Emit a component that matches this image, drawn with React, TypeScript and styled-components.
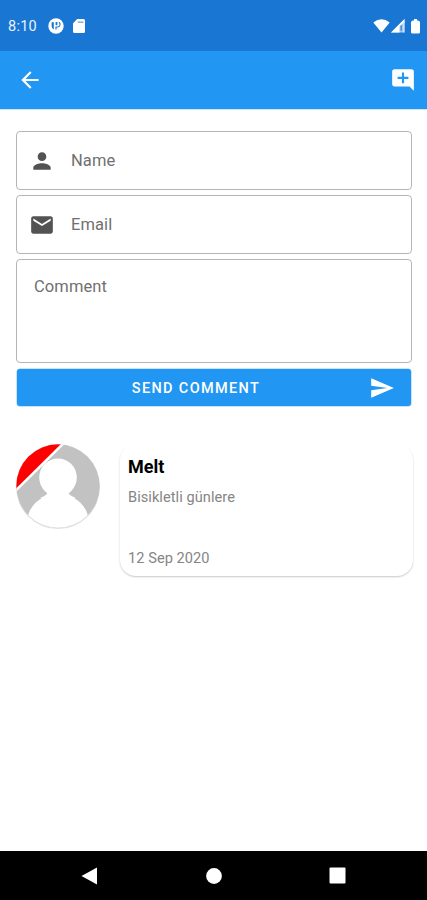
import React from 'react';
import styled, { createGlobalStyle } from 'styled-components';

const GlobalStyle = createGlobalStyle`
  *, *::before, *::after { box-sizing: border-box; }
  body { margin: 0; background: #fff; font-family: Roboto, "Liberation Sans", sans-serif; }
`;

const Screen = styled.div`
  width: 427px;
  height: 900px;
  display: flex;
  flex-direction: column;
  background: #fff;
  overflow: hidden;
`;

const StatusBar = styled.header`
  height: 51px;
  flex: none;
  display: flex;
  align-items: center;
  padding: 1px 7px 0 8px;
  background: #1976d2;
  color: #e9f2fb;
`;

const Clock = styled.span`
  width: 40px;
  padding-top: 2px;
  font-size: 14.5px;
  line-height: 20px;
  letter-spacing: 0.25px;
`;

const StatusGroup = styled.div<{ $end?: boolean }>`
  display: flex;
  align-items: center;
  margin-left: ${(p) => (p.$end ? 'auto' : '0')};
`;

const Icon = styled.svg<{ $gap?: number }>`
  display: block;
  flex: none;
  fill: currentColor;
  margin-left: ${(p) => p.$gap ?? 0}px;
`;

const AppBar = styled.nav`
  height: 58px;
  flex: none;
  display: flex;
  align-items: center;
  justify-content: space-between;
  padding: 0 11px 0 17px;
  background: #2196f3;
  color: #fff;
  box-shadow: 0 1px 0 #cbe6fb;
`;

const IconButton = styled.button`
  padding: 0;
  border: 0;
  background: none;
  color: inherit;
`;

const Content = styled.main`
  flex: 1;
  padding: 22px 15px 0 16px;
`;

const Form = styled.form`
  display: flex;
  flex-direction: column;
  gap: 5px;
`;

const Field = styled.label<{ $height: number; $multiline?: boolean }>`
  height: ${(p) => p.$height}px;
  display: flex;
  align-items: ${(p) => (p.$multiline ? 'flex-start' : 'center')};
  gap: 16px;
  padding: ${(p) => (p.$multiline ? '17px 17px 0' : '0 12px')};
  border: 1.5px solid #b5b5b5;
  border-radius: 4px;
  color: #535353;
`;

const Placeholder = styled.span`
  font-size: 16.5px;
  line-height: 20px;
  letter-spacing: 0.1px;
  color: #707070;
`;

const SendButton = styled.button`
  height: 37px;
  display: flex;
  align-items: center;
  margin: 1px 1px 1px;
  padding: 0 16px 0 0;
  border: 0;
  border-radius: 3px;
  background: #2196f3;
  box-shadow: 0 0 0 0.5px #90caf9;
  color: #fff;
  font-family: inherit;
`;

const SendLabel = styled.span`
  flex: 1;
  padding: 2px 0 0 6px;
  text-align: center;
  font-size: 14.5px;
  font-weight: 500;
  letter-spacing: 1.35px;
`;

const Comment = styled.article`
  display: flex;
  gap: 20px;
  margin-top: 37px;
`;

const Avatar = styled.svg`
  width: 84px;
  height: 86px;
  display: block;
  flex: none;
`;

const Card = styled.section`
  flex: 1;
  height: 132px;
  display: flex;
  flex-direction: column;
  margin-right: -1px;
  padding: 12px 8px 8px 8px;
  border-radius: 16px;
  box-shadow: 0 1px 2px rgba(0, 0, 0, 0.22);
  clip-path: inset(4px -4px -5px -4px);
`;

const Author = styled.h2`
  margin: 0;
  font-size: 18px;
  line-height: 22px;
  font-weight: 700;
  color: #000;
`;

const Small = styled.p<{ $last?: boolean }>`
  margin: ${(p) => (p.$last ? 'auto 0 0' : '9px 0 0')};
  font-size: 14.6px;
  line-height: 20px;
  letter-spacing: 0.05px;
  color: #858585;
`;

const NavBar = styled.footer`
  height: 49px;
  flex: none;
  display: flex;
  align-items: center;
  justify-content: space-between;
  padding: 0 81px 0 81px;
  background: #000;
  color: #fff;
`;

const paths = {
  back: 'M20 11H7.83l5.59-5.59L12 4l-8 8 8 8 1.41-1.41L7.83 13H20v-2z',
  addComment:
    'M22 4c0-1.1-.9-2-2-2H4c-1.1 0-2 .9-2 2v12c0 1.1.9 2 2 2h14l4 4V4zm-5 7h-4v4h-2v-4H7V9h4V5h2v4h4v2z',
  person:
    'M12 12c2.21 0 4-1.79 4-4s-1.79-4-4-4-4 1.79-4 4 1.79 4 4 4zm0 2c-2.67 0-8 1.34-8 4v2h16v-2c0-2.66-5.33-4-8-4z',
  mail: 'M20 4H4c-1.1 0-2 .9-2 2v12c0 1.1.9 2 2 2h16c1.1 0 2-.9 2-2V6c0-1.1-.9-2-2-2zm0 4l-8 5-8-5V6l8 5 8-5v2z',
  send: 'M2.01 21L23 12 2.01 3 2 10l15 2-15 2z',
};

const MaterialIcon = ({ name }: { name: keyof typeof paths }) => (
  <Icon width="26" height="26" viewBox="0 0 24 24" aria-hidden="true">
    <path d={paths[name]} />
  </Icon>
);

export default function App() {
  return (
    <>
      <GlobalStyle />
      <Screen>
        <StatusBar>
          <Clock>8:10</Clock>
          <StatusGroup>
            <Icon width="16" height="16" viewBox="0 0 16 16">
              <circle cx="8" cy="8" r="7.7" fill="#fff" />
              <path d="M3.6 4.2H5.8V11.4Q3.6 10.2 3.6 8z" fill="#1976d2" />
              <path d="M7.6 4H9.4V7.2H7.6z" fill="#1976d2" />
              <path d="M11 4.2Q12.4 5.2 12 7T9.6 9H8V11.6" fill="none" stroke="#1976d2" strokeWidth="1.1" />
            </Icon>
            <Icon $gap={9} width="12" height="14" viewBox="0 0 12 14">
              <path d="M4.2 0H10.5Q12 0 12 1.5V12.5Q12 14 10.5 14H1.5Q0 14 0 12.5V4.2z" fill="#fff" />
              <path d="M4.8 3.2H10.4" stroke="#1976d2" strokeWidth="1.4" opacity="0.6" />
            </Icon>
          </StatusGroup>
          <StatusGroup $end>
            <Icon width="17" height="14" viewBox="0 0 17 14">
              <path d="M0.3 3.4Q8.5-3 16.7 3.4L8.5 13.6z" fill="#fff" />
            </Icon>
            <Icon $gap={1} width="14" height="14" viewBox="0 0 14 14">
              <path d="M0 13.5L13.5 0V13.5z" fill="#a9cbee" />
              <path d="M0 13.5L13.5 0V4H12L8.5 7.5V13.5z" fill="#fff" />
              <path d="M10.2 6.3v5.4" stroke="#1976d2" strokeWidth="1.3" opacity="0.8" />
              <path d="M12.9 3v10.5" stroke="#e4effa" strokeWidth="1" />
            </Icon>
            <Icon $gap={6} width="9" height="15" viewBox="0 0 9 15">
              <path d="M3 0h3v1.5h1.2Q9 2 9 3.5v9.7Q9 14.4 7.4 14.4H1.6Q0 14.4 0 13.2V3.5Q0 2 1.8 1.5H3z" fill="#fff" />
            </Icon>
          </StatusGroup>
        </StatusBar>
        <AppBar>
          <IconButton aria-label="Back"><MaterialIcon name="back" /></IconButton>
          <IconButton aria-label="Add comment"><MaterialIcon name="addComment" /></IconButton>
        </AppBar>
        <Content>
          <Form>
            <Field $height={59}><MaterialIcon name="person" /><Placeholder>Name</Placeholder></Field>
            <Field $height={59}><MaterialIcon name="mail" /><Placeholder>Email</Placeholder></Field>
            <Field $height={104} $multiline><Placeholder>Comment</Placeholder></Field>
            <SendButton type="button">
              <SendLabel>SEND COMMENT</SendLabel>
              <MaterialIcon name="send" />
            </SendButton>
          </Form>
          <Comment>
            <Avatar viewBox="0 0 84 86">
              <defs>
                <clipPath id="avatar-circle"><circle cx="42" cy="42" r="41.7" /></clipPath>
              </defs>
              <circle cx="42" cy="43.2" r="41.9" fill="#e2e2e2" />
              <g clipPath="url(#avatar-circle)">
                <rect width="84" height="84" fill="#c2c2c2" />
                <path d="M0 0H48.2L0 47.4z" fill="#fff" />
                <path d="M48.2 0L0 47.4" stroke="#fff" strokeWidth="1" />
                <path d="M0 0H45L0 44.4z" fill="#f00" />
                <ellipse cx="42" cy="33.5" rx="18.8" ry="19" fill="#fff" />
                <path d="M31 45C33 49 31 51 24 54H60C53 51 51 49 53 45z" fill="#fff" />
                <ellipse cx="42" cy="79" rx="31" ry="29.5" fill="#fff" />
              </g>
            </Avatar>
            <Card>
              <Author>Melt</Author>
              <Small>Bisikletli günlere</Small>
              <Small $last>12 Sep 2020</Small>
            </Card>
          </Comment>
        </Content>
        <NavBar>
          <Icon width="17" height="18" viewBox="0 0 17 18"><path d="M0.5 9L16 0.5V17.5z" /></Icon>
          <Icon width="16" height="16" viewBox="0 0 16 16"><circle cx="8" cy="8" r="7.9" /></Icon>
          <Icon width="17" height="17" viewBox="0 0 17 17"><rect x="0.5" y="0.5" width="16" height="16" rx="1" /></Icon>
        </NavBar>
      </Screen>
    </>
  );
}
